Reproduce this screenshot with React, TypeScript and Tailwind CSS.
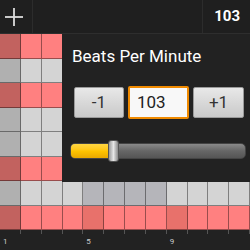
import React from "react";

const rowTypes = ["P", "G", "P", "G", "G", "P", "G", "P"];

function cellColor(r: number, c: number): string {
  const t = rowTypes[r];
  if (t === "P") {
    if (c === 0) return "bg-[#c2625f]";
    if (r === 7 && (c === 4 || c === 8)) return "bg-[#e8716b]";
    return "bg-[#ff8080]";
  }
  if (c === 0) return "bg-[#b0b0b0]";
  if (r === 6 && c >= 4 && c <= 7) return "bg-[#b5b5ba]";
  return "bg-[#d4d4d4]";
}

export default function App() {
  const rows = Array.from({ length: 8 }, (_, i) => i);
  const cols = Array.from({ length: 12 }, (_, i) => i);
  return (
    <div
      className="relative w-[250px] h-[250px] overflow-hidden bg-[#222222] flex flex-col"
      style={{ fontFamily: "Roboto, 'Noto Sans', sans-serif" }}
    >
      {/* top bar */}
      <div className="h-[34px] flex border-b border-[#2e2e2e] bg-[#1f1f1f]">
        <div className="w-[33px] border-r border-[#2c2c2c] flex items-center justify-center">
          <svg width="20" height="20" viewBox="0 0 20 20" className="ml-[-4px]">
            <line x1="10" y1="1" x2="10" y2="19" stroke="#dcdcdc" strokeWidth="1.8" />
            <line x1="1" y1="10" x2="19" y2="10" stroke="#dcdcdc" strokeWidth="1.8" />
          </svg>
        </div>
        <div className="flex-1" />
        <div className="w-[48px] border-l border-[#2c2c2c] flex items-center justify-end pr-[10px]">
          <span className="text-[15px] font-bold text-white leading-none">103</span>
        </div>
      </div>

      {/* grid */}
      <div className="h-[196px] grid grid-cols-12 grid-rows-8">
        {rows.map((r) =>
          cols.map((c) => (
            <div
              key={`${r}-${c}`}
              className={`${cellColor(r, c)} border-r border-b border-black/40`}
            />
          ))
        )}
      </div>

      {/* bottom ruler */}
      <div className="h-[20px] flex flex-col">
        <div className="grid grid-cols-12 h-[4px]">
          {cols.map((c) => (
            <div key={c} className="border-r border-[#555555]" />
          ))}
        </div>
        <div className="grid grid-cols-12 pt-[4px]">
          {cols.map((c) => (
            <div key={c} className="pl-[3px] text-[8px] leading-[8px] text-[#cccccc]">
              {c === 0 ? "1" : c === 4 ? "5" : c === 8 ? "9" : ""}
            </div>
          ))}
        </div>
      </div>

      {/* BPM panel overlay */}
      <div className="absolute left-[62px] top-[34px] w-[188px] h-[148px] bg-[#222222] flex flex-col">
        <div className="pl-[10px] pt-[12px] text-[17px] leading-[20px] text-white">
          Beats Per Minute
        </div>
        <div className="flex gap-[4px] pl-[12px] mt-[20px]">
          <div className="w-[50px] h-[31px] mt-[1px] rounded-[2px] border border-[#9a9a9a] bg-gradient-to-b from-[#e8e8e8] to-[#c9c9c9] flex items-center justify-center text-[17px] text-[#333333]">
            -1
          </div>
          <div className="w-[61px] h-[33px] rounded-[2px] border-2 border-[#f08a00] bg-[#f8f8f8] flex items-center pl-[7px] text-[17px] text-[#222222]">
            103
          </div>
          <div className="w-[51px] h-[31px] mt-[1px] rounded-[2px] border border-[#9a9a9a] bg-gradient-to-b from-[#e8e8e8] to-[#c9c9c9] flex items-center justify-center text-[17px] text-[#333333]">
            +1
          </div>
        </div>
        <div className="relative ml-[8px] mt-[21px] w-[176px] h-[22px] flex items-center">
          <div className="w-full h-[16px] rounded-[5px] bg-gradient-to-b from-[#8a8a8a] via-[#666666] to-[#555555] border border-[#444444] flex overflow-hidden">
            <div className="w-[42px] h-full bg-gradient-to-b from-[#ffd640] via-[#ffc400] to-[#e9a800]" />
          </div>
          <div className="absolute left-[38px] top-0 w-[11px] h-[22px] rounded-[3px] border border-[#555555] bg-gradient-to-r from-[#9a9a9a] via-[#e6e6e6] to-[#8a8a8a]" />
        </div>
      </div>
    </div>
  );
}
